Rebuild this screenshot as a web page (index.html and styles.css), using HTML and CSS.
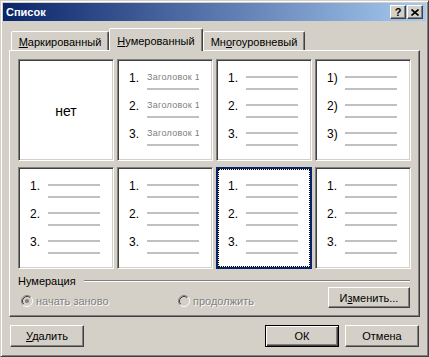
FILE: index.html
```html
<!DOCTYPE html>
<html lang="ru">
<head>
    <meta charset="UTF-8">
    <meta name="viewport" content="width=device-width, initial-scale=1.0">
    <title>Список</title>
    <link rel="stylesheet" href="styles.css">
</head>
<body>
    <div class="window">
        <div class="titlebar">
            <span class="title">Список</span>
            <span class="caption-btn">?</span>
            <span class="caption-btn">
                <svg width="8" height="7" viewBox="0 0 8 7"><path d="M0.5 0.5 L7.5 6.5 M7.5 0.5 L0.5 6.5" stroke="#000" stroke-width="1.6" fill="none"/></svg>
            </span>
        </div>

        <div class="dialog-body">
            <div class="tabs">
                <div class="tab tab-1"><u>М</u>аркированный</div>
                <div class="tab tab-2 active"><u>Н</u>умерованный</div>
                <div class="tab tab-3">Мн<u>о</u>гоуровневый</div>
            </div>

            <div class="panel">
                <div class="gallery">
                    <div class="cell cell-none">нет</div>

                    <div class="cell">
                        <div class="item"><span class="num">1.</span><div class="lines"><div class="heading">Заголовок 1</div><div class="line"></div></div></div>
                        <div class="item"><span class="num">2.</span><div class="lines"><div class="heading">Заголовок 1</div><div class="line"></div></div></div>
                        <div class="item"><span class="num">3.</span><div class="lines"><div class="heading">Заголовок 1</div><div class="line"></div></div></div>
                    </div>

                    <div class="cell">
                        <div class="item"><span class="num">1.</span><div class="lines"><div class="line"></div><div class="line"></div></div></div>
                        <div class="item"><span class="num">2.</span><div class="lines"><div class="line"></div><div class="line"></div></div></div>
                        <div class="item"><span class="num">3.</span><div class="lines"><div class="line"></div><div class="line"></div></div></div>
                    </div>

                    <div class="cell">
                        <div class="item"><span class="num">1)</span><div class="lines"><div class="line"></div><div class="line"></div></div></div>
                        <div class="item"><span class="num">2)</span><div class="lines"><div class="line"></div><div class="line"></div></div></div>
                        <div class="item"><span class="num">3)</span><div class="lines"><div class="line"></div><div class="line"></div></div></div>
                    </div>

                    <div class="cell">
                        <div class="item"><span class="num">1.</span><div class="lines"><div class="line"></div><div class="line"></div></div></div>
                        <div class="item"><span class="num">2.</span><div class="lines"><div class="line"></div><div class="line"></div></div></div>
                        <div class="item"><span class="num">3.</span><div class="lines"><div class="line"></div><div class="line"></div></div></div>
                    </div>

                    <div class="cell">
                        <div class="item"><span class="num">1.</span><div class="lines"><div class="line"></div><div class="line"></div></div></div>
                        <div class="item"><span class="num">2.</span><div class="lines"><div class="line"></div><div class="line"></div></div></div>
                        <div class="item"><span class="num">3.</span><div class="lines"><div class="line"></div><div class="line"></div></div></div>
                    </div>

                    <div class="cell selected">
                        <div class="item"><span class="num">1.</span><div class="lines"><div class="line"></div><div class="line"></div></div></div>
                        <div class="item"><span class="num">2.</span><div class="lines"><div class="line"></div><div class="line"></div></div></div>
                        <div class="item"><span class="num">3.</span><div class="lines"><div class="line"></div><div class="line"></div></div></div>
                    </div>

                    <div class="cell">
                        <div class="item"><span class="num">1.</span><div class="lines"><div class="line"></div><div class="line"></div></div></div>
                        <div class="item"><span class="num">2.</span><div class="lines"><div class="line"></div><div class="line"></div></div></div>
                        <div class="item"><span class="num">3.</span><div class="lines"><div class="line"></div><div class="line"></div></div></div>
                    </div>
                </div>

                <div class="group">
                    <div class="group-title"><span>Нумерация</span><span class="etch"></span></div>
                    <div class="group-row">
                        <label class="radio radio-first disabled">
                            <svg width="12" height="12" viewBox="0 0 12 12">
                                <circle cx="6" cy="6" r="4.5" fill="#d4d0c8"/>
                                <path d="M2.11 9.89 A5.5 5.5 0 0 1 9.89 2.11" stroke="#808080" fill="none"/>
                                <path d="M9.89 2.11 A5.5 5.5 0 0 1 2.11 9.89" stroke="#fff" fill="none"/>
                                <path d="M2.82 9.18 A4.5 4.5 0 0 1 9.18 2.82" stroke="#404040" fill="none"/>
                                <path d="M9.18 2.82 A4.5 4.5 0 0 1 2.82 9.18" stroke="#d4d0c8" fill="none"/>
                                <circle cx="6" cy="6" r="2" fill="#808080"/>
                            </svg>
                            начать заново
                        </label>
                        <label class="radio disabled">
                            <svg width="12" height="12" viewBox="0 0 12 12">
                                <circle cx="6" cy="6" r="4.5" fill="#d4d0c8"/>
                                <path d="M2.11 9.89 A5.5 5.5 0 0 1 9.89 2.11" stroke="#808080" fill="none"/>
                                <path d="M9.89 2.11 A5.5 5.5 0 0 1 2.11 9.89" stroke="#fff" fill="none"/>
                                <path d="M2.82 9.18 A4.5 4.5 0 0 1 9.18 2.82" stroke="#404040" fill="none"/>
                                <path d="M9.18 2.82 A4.5 4.5 0 0 1 2.82 9.18" stroke="#d4d0c8" fill="none"/>
                            </svg>
                            продолжить
                        </label>
                        <button class="btn btn-change">И<u>з</u>менить...</button>
                    </div>
                </div>
            </div>

            <div class="actions">
                <button class="btn"><u>У</u>далить</button>
                <button class="btn btn-default">ОК</button>
                <button class="btn">Отмена</button>
            </div>
        </div>
    </div>
</body>
</html>
```

FILE: styles.css
```css
* {
    box-sizing: border-box;
}

body {
    margin: 0;
    font-family: 'Liberation Sans', Arial, sans-serif;
    font-size: 11px;
    color: #000;
    background-color: #d4d0c8;
}

.window {
    width: 429px;
    height: 357px;
    padding: 2px;
    background-color: #d4d0c8;
    border: 1px solid;
    border-color: #d4d0c8 #404040 #404040 #d4d0c8;
    box-shadow: inset 1px 1px #fff, inset -1px -1px #808080;
}

/* title bar */

.titlebar {
    display: flex;
    align-items: center;
    height: 18px;
    padding: 0 3px 0 3px;
    background: linear-gradient(to right, #0a246a, #a6caf0);
    color: #fff;
}

.title {
    flex: 1;
    font-weight: bold;
}

.caption-btn {
    display: flex;
    align-items: center;
    justify-content: center;
    width: 16px;
    height: 14px;
    margin-left: 1px;
    background-color: #d4d0c8;
    color: #000;
    font-weight: bold;
    font-size: 11px;
    border: 1px solid;
    border-color: #fff #404040 #404040 #fff;
    box-shadow: inset -1px -1px #808080;
}

.dialog-body {
    padding: 7px 6px 0;
}

/* tabs */

.tabs {
    display: flex;
    align-items: flex-end;
    height: 22px;
    padding-left: 2px;
}

.tab {
    display: flex;
    align-items: center;
    justify-content: center;
    height: 19px;
    padding-top: 1px;
    background-color: #d4d0c8;
    border: 1px solid;
    border-bottom: 0;
    border-color: #fff #404040 transparent #fff;
    border-radius: 2px 2px 0 0;
    box-shadow: inset -1px 0 #808080;
    white-space: nowrap;
}

.tab-1 { width: 98px; }
.tab-2 { width: 94px; }
.tab-3 { width: 102px; }

.tab.active {
    position: relative;
    z-index: 1;
    height: 23px;
    margin-bottom: -1px;
    padding-top: 2px;
}

.panel {
    padding: 8px;
    border: 1px solid;
    border-color: #fff #404040 #404040 #fff;
    box-shadow: inset -1px -1px #808080;
}

/* list styles gallery */

.gallery {
    display: grid;
    grid-template-columns: repeat(4, 96px);
    grid-template-rows: repeat(2, 102px);
    column-gap: 3px;
    row-gap: 6px;
}

.cell {
    padding: 11px 0 0 11px;
    background-color: #fff;
    border: 1px solid;
    border-color: #808080 #fff #fff #808080;
    box-shadow: inset 1px 1px #404040, inset -1px -1px #d4d0c8;
}

.cell.selected {
    border-color: #0a246a;
    box-shadow: inset 0 0 0 1px #0a246a;
    outline: 1px dotted #000;
    outline-offset: -3px;
}

.cell-none {
    display: flex;
    align-items: center;
    justify-content: center;
    padding: 2px 0 0;
    font-size: 14px;
}

.item {
    display: flex;
    height: 28px;
}

.num {
    width: 18px;
    font-size: 12px;
    line-height: 14px;
}

.lines {
    width: 52px;
    padding-top: 5px;
}

.line {
    height: 2px;
    background-color: #c0c0c0;
}

.line + .line {
    margin-top: 10px;
}

.heading + .line {
    margin-top: 5px;
}

.lines:has(.heading) {
    padding-top: 0;
}

.heading {
    width: 52px;
    height: 12px;
    overflow: hidden;
    white-space: nowrap;
    font-size: 9px;
    line-height: 12px;
    letter-spacing: 0.3px;
    color: #808080;
}

/* numbering group */

.group {
    margin-top: 6px;
}

.group-title {
    display: flex;
    align-items: center;
    height: 12px;
    line-height: 12px;
}

.etch {
    flex: 1;
    height: 2px;
    margin-left: 8px;
    margin-right: 1px;
    border-top: 1px solid #808080;
    border-bottom: 1px solid #fff;
}

.group-row {
    display: flex;
    align-items: flex-end;
    height: 21px;
}

.radio {
    display: flex;
    align-items: center;
    gap: 3px;
    height: 12px;
    margin-bottom: 1px;
    line-height: 12px;
}

.radio-first {
    width: 157px;
    margin-left: 3px;
}

.radio.disabled {
    color: #808080;
    text-shadow: 1px 1px #fff;
}

/* buttons */

.btn {
    width: 74px;
    height: 22px;
    padding: 0;
    font-family: inherit;
    font-size: 11px;
    color: #000;
    background-color: #d4d0c8;
    border: 1px solid;
    border-color: #fff #404040 #404040 #fff;
    border-radius: 0;
    box-shadow: inset -1px -1px #808080;
}

.btn-change {
    width: 82px;
    height: 21px;
    margin-left: auto;
    margin-right: 1px;
}

.btn-default {
    margin-left: auto;
    border-color: #000;
    box-shadow: inset 1px 1px #fff, inset -1px -1px #404040, inset -2px -2px #808080;
}

.actions {
    display: flex;
    gap: 6px;
    margin-top: 8px;
    padding: 0 1px;
}
```
